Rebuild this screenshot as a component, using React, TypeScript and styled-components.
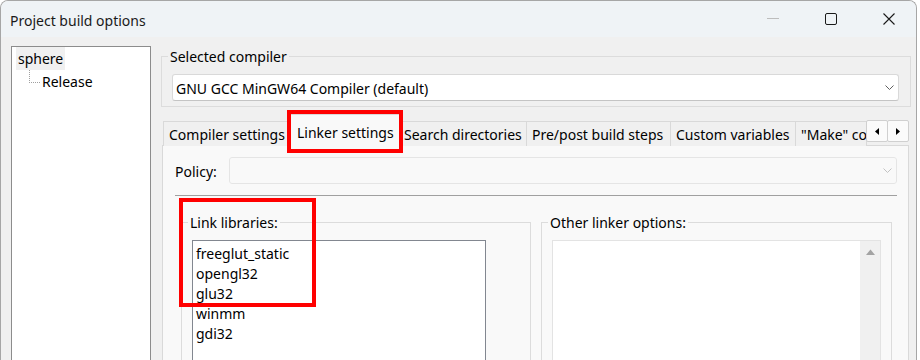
import React from "react";
import styled, { createGlobalStyle } from "styled-components";

const GlobalStyle = createGlobalStyle`
  html, body { margin: 0; padding: 0; background: #ffffff; overflow: hidden; }
  body {
    font-family: "Noto Sans", "Open Sans", sans-serif;
    font-size: 14px;
    color: #000000;
  }
  * { box-sizing: border-box; }
`;

const Window = styled.div`
  width: 917px;
  height: 372px;
  border: 1px solid #a6a6a6;
  border-bottom: none;
  border-radius: 8px 8px 0 0;
  overflow: hidden;
  display: flex;
  flex-direction: column;
  background: #f0f0f0;
`;

const TitleBar = styled.div`
  flex: none;
  height: 36px;
  display: flex;
  align-items: center;
  padding-left: 9px;
  background: #eff3f6;
`;

const Title = styled.div`
  flex: 1;
  line-height: 20px;
  padding-top: 4px;
  color: #1a1a1a;
`;

const Controls = styled.div`
  display: flex;
  align-items: center;
  gap: 46px;
  padding-right: 21px;
`;

const ControlIcon = styled.svg`
  display: block;
  width: 12px;
  height: 12px;
`;

const Body = styled.div`
  flex: 1;
  display: flex;
  gap: 10px;
  padding: 9px 0 0 10px;
`;

const Tree = styled.div`
  width: 140px;
  border: 1px solid #8c8c8c;
  background: #ffffff;
`;

const TreeRow = styled.div<{ $indent: number }>`
  display: flex;
  align-items: flex-start;
  height: 23px;
  padding-left: ${(p) => p.$indent}px;
`;

const TreeLabel = styled.span<{ $selected?: boolean }>`
  line-height: 22px;
  padding: 1px 2px 0;
  background: ${(p) => (p.$selected ? "#f0f0f0" : "transparent")};
`;

const TreeConnector = styled.span`
  width: 11px;
  height: 13px;
  border-left: 1px dotted #a0a0a0;
  border-bottom: 1px dotted #a0a0a0;
`;

const Main = styled.div`
  width: 750px;
  display: flex;
  flex-direction: column;
`;

const GroupBox = styled.div<{ $pad: string }>`
  position: relative;
  border: 1px solid #dcdcdc;
  padding: ${(p) => p.$pad};
`;

const Caption = styled.span<{ $bg: string }>`
  position: absolute;
  top: -10px;
  left: 6px;
  padding: 0 2px;
  line-height: 20px;
  background: ${(p) => p.$bg};
`;

const CompilerGroup = styled(GroupBox)`
  margin-top: 10px;
`;

const Combo = styled.div<{ $disabled?: boolean }>`
  height: 27px;
  display: flex;
  align-items: center;
  padding: 0 4px 0 3px;
  border: 1px solid ${(p) => (p.$disabled ? "#e5e5e5" : "#d9d9d9")};
  border-bottom-color: ${(p) => (p.$disabled ? "#e5e5e5" : "#c4c4c4")};
  border-radius: 3px;
  background: ${(p) => (p.$disabled ? "#f9f9f9" : "#ffffff")};
`;

const ComboText = styled.span`
  flex: 1;
  line-height: 20px;
  padding-top: 2px;
  white-space: nowrap;
`;

const Chevron = styled.svg`
  display: block;
  width: 9px;
  height: 5px;
`;

const Notebook = styled.div`
  flex: 1;
  display: flex;
  flex-direction: column;
  margin: 7px 2px 0 1px;
`;

const TabStrip = styled.div`
  position: relative;
  height: 32px;
  margin-bottom: -1px;
  padding-left: 2px;
  display: flex;
  align-items: flex-end;
`;

const Tab = styled.div<{ $w: number; $active?: boolean }>`
  position: relative;
  z-index: ${(p) => (p.$active ? 1 : 0)};
  flex: none;
  width: ${(p) => p.$w}px;
  height: ${(p) => (p.$active ? 32 : 25)}px;
  margin-left: ${(p) => (p.$active ? -3 : -1)}px;
  margin-right: ${(p) => (p.$active ? -2 : 0)}px;
  padding: ${(p) => (p.$active ? "8px 0 0 9px" : "3px 0 0 5px")};
  border: 1px solid #d9d9d9;
  border-bottom: none;
  background: ${(p) => (p.$active ? "#f9f9f9" : "#f0f0f0")};
`;

const TabLabel = styled.span`
  display: block;
  line-height: 20px;
  white-space: nowrap;
  overflow: hidden;
`;

const ScrollButtons = styled.div`
  position: absolute;
  top: 6px;
  right: 0;
  display: flex;
  z-index: 2;
`;

const ScrollButton = styled.div`
  width: 22px;
  height: 22px;
  margin-left: -1px;
  display: flex;
  align-items: center;
  justify-content: center;
  border: 1px solid #d0d0d0;
  border-radius: 2px;
  background: #fbfbfb;
`;

const Arrow = styled.svg`
  display: block;
  width: 4px;
  height: 7px;
`;

const Panel = styled.div`
  flex: 1;
  background: #f9f9f9;
  border: 1px solid #d9d9d9;
  padding: 11px 11px 0 12px;
`;

const PolicyRow = styled.div`
  display: flex;
  align-items: center;
`;

const PolicyLabel = styled.span`
  flex: none;
  width: 54px;
  line-height: 20px;
  padding-top: 2px;
`;

const PolicyCombo = styled(Combo)`
  flex: 1;
`;

const Separator = styled.div`
  height: 1px;
  margin-top: 11px;
  background: #a0a0a0;
`;

const GroupsRow = styled.div`
  display: flex;
  gap: 10px;
  margin-top: 26px;
  padding: 0 5px 0 6px;
`;

const LibrariesGroup = styled(GroupBox)`
  flex: none;
  width: 350px;
  height: 200px;
`;

const OptionsGroup = styled(GroupBox)`
  flex: 1;
  height: 200px;
`;

const ListBox = styled.div`
  width: 294px;
  height: 200px;
  border: 1px solid #828790;
  background: #ffffff;
  padding: 3px 0 0 3px;
`;

const ListItem = styled.div`
  line-height: 20px;
  white-space: nowrap;
`;

const TextArea = styled.div`
  height: 200px;
  display: flex;
  justify-content: flex-end;
  border: 1px solid #e3e3e3;
  background: #ffffff;
`;

const ScrollBar = styled.div`
  width: 20px;
  display: flex;
  justify-content: center;
  padding-top: 8px;
  background: #f0f0f0;
`;

const UpArrow = styled.svg`
  display: block;
  width: 9px;
  height: 6px;
`;

const Highlight = styled.div<{ $top: number; $left: number; $w: number; $h: number }>`
  position: absolute;
  top: ${(p) => p.$top}px;
  left: ${(p) => p.$left}px;
  width: ${(p) => p.$w}px;
  height: ${(p) => p.$h}px;
  border: 4px solid #ff0000;
  pointer-events: none;
  z-index: 3;
`;

const tabs = [
  { label: "Compiler settings", w: 127 },
  { label: "Linker settings", w: 114, active: true },
  { label: "Search directories", w: 129 },
  { label: "Pre/post build steps", w: 145 },
  { label: "Custom variables", w: 126 },
  { label: "\"Make\" commands", w: 72 },
];

const libraries = ["freeglut_static", "opengl32", "glu32", "winmm", "gdi32"];

const ChevronIcon = ({ color }: { color: string }) => (
  <Chevron viewBox="0 0 9 5">
    <path d="M0.5 0.5 L4.5 4.5 L8.5 0.5" fill="none" stroke={color} strokeWidth="1" />
  </Chevron>
);

export default function App() {
  return (
    <>
      <GlobalStyle />
      <Window>
        <TitleBar>
          <Title>Project build options</Title>
          <Controls>
            <ControlIcon viewBox="0 0 12 12">
              <path d="M0 5.5 H12" stroke="#bdbdbd" strokeWidth="1" />
            </ControlIcon>
            <ControlIcon viewBox="0 0 12 12">
              <rect x="0.5" y="0.5" width="11" height="11" rx="1.5" fill="none" stroke="#1a1a1a" strokeWidth="1" />
            </ControlIcon>
            <ControlIcon viewBox="0 0 12 12">
              <path d="M0.5 0.5 L11.5 11.5 M11.5 0.5 L0.5 11.5" stroke="#1a1a1a" strokeWidth="1.1" />
            </ControlIcon>
          </Controls>
        </TitleBar>
        <Body>
          <Tree>
            <TreeRow $indent={4}>
              <TreeLabel $selected>sphere</TreeLabel>
            </TreeRow>
            <TreeRow $indent={17}>
              <TreeConnector />
              <TreeLabel>Release</TreeLabel>
            </TreeRow>
          </Tree>
          <Main>
            <CompilerGroup $pad="17px 11px 5px 10px">
              <Caption $bg="#f0f0f0">Selected compiler</Caption>
              <Combo>
                <ComboText>GNU GCC MinGW64 Compiler (default)</ComboText>
                <ChevronIcon color="#5f5f5f" />
              </Combo>
            </CompilerGroup>
            <Notebook>
              <TabStrip>
                {tabs.map((t) => (
                  <Tab key={t.label} $w={t.w} $active={t.active}>
                    <TabLabel>{t.label}</TabLabel>
                    {t.active && <Highlight $top={-5} $left={-1} $w={116} $h={43} />}
                  </Tab>
                ))}
                <ScrollButtons>
                  <ScrollButton>
                    <Arrow viewBox="0 0 4 7">
                      <path d="M4 0 L0 3.5 L4 7 Z" fill="#000000" />
                    </Arrow>
                  </ScrollButton>
                  <ScrollButton>
                    <Arrow viewBox="0 0 4 7">
                      <path d="M0 0 L4 3.5 L0 7 Z" fill="#000000" />
                    </Arrow>
                  </ScrollButton>
                </ScrollButtons>
              </TabStrip>
              <Panel>
                <PolicyRow>
                  <PolicyLabel>Policy:</PolicyLabel>
                  <PolicyCombo $disabled>
                    <ComboText />
                    <ChevronIcon color="#c2c2c2" />
                  </PolicyCombo>
                </PolicyRow>
                <Separator />
                <GroupsRow>
                  <LibrariesGroup $pad="17px 0 0 10px">
                    <Caption $bg="#f9f9f9">Link libraries:</Caption>
                    <ListBox>
                      {libraries.map((l) => (
                        <ListItem key={l}>{l}</ListItem>
                      ))}
                    </ListBox>
                    <Highlight $top={-25} $left={-3} $w={137} $h={109} />
                  </LibrariesGroup>
                  <OptionsGroup $pad="17px 10px 0 10px">
                    <Caption $bg="#f9f9f9">Other linker options:</Caption>
                    <TextArea>
                      <ScrollBar>
                        <UpArrow viewBox="0 0 9 6">
                          <path d="M0 6 L4.5 0.5 L9 6 Z" fill="#a3a3a3" />
                        </UpArrow>
                      </ScrollBar>
                    </TextArea>
                  </OptionsGroup>
                </GroupsRow>
              </Panel>
            </Notebook>
          </Main>
        </Body>
      </Window>
    </>
  );
}
